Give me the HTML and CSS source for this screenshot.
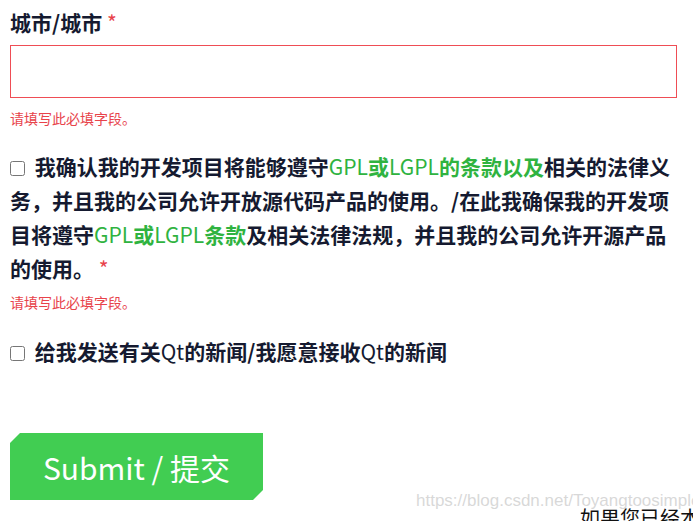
FILE: index.html
```html
<!DOCTYPE html>
<html>
<head>
   <meta charset="utf-8">
   <title>Qt 表单</title>
   <link rel="stylesheet" href="styles.css">
</head>
<body>
<div id="w">
   <form id="qform">
      <div class="field">
         <label class="flabel" for="city">城市/城市 <span class="req">*</span></label>
         <input type="text" id="city" name="city" class="finput">
         <p class="ferr">请填写此必填字段。</p>
      </div>

      <div class="field">
         <p class="check">
            <input type="checkbox" id="gpl" class="cbox">
            <label for="gpl">我确认我的开发项目将能够遵守<span class="green"><span class="latin">GPL</span>或<span class="latin">LGPL</span>的条款以及</span>相关的法律义务，并且我的公司允许开放源代码产品的使用。/在此我确保我的开发项目将遵守<span class="green"><span class="latin">GPL</span>或<span class="latin">LGPL</span>条款</span>及相关法律法规，并且我的公司允许开源产品的使用。 <span class="req">*</span></label>
         </p>
         <p class="ferr">请填写此必填字段。</p>
      </div>

      <div class="field">
         <p class="check">
            <input type="checkbox" id="news" class="cbox">
            <label for="news">给我发送有关<span class="latin">Qt</span>的新闻/我愿意接收<span class="latin">Qt</span>的新闻</label>
         </p>
      </div>

      <button type="button" class="submit">Submit / 提交</button>
   </form>

   <p class="more">如果您已经本</p>
</div>
<div class="mark">https://blog.csdn.net/Toyangtoosimple</div>
</body>
</html>
```

FILE: styles.css
```css
* { margin: 0; padding: 0; }
html, body { height: 100%; overflow: hidden; }
body { font-family: "Noto Sans CJK SC", "Noto Sans", sans-serif; color: #151a30; background: #fff; }

#w { padding: 8px 16px 0 10px; }

.flabel { display: block; font-size: 21px; font-weight: bold; line-height: 28px; }
.req { color: #e8434b; font-weight: normal; }

.finput {
display: block;
width: 667px;
height: 53px;
margin-top: 9px;
border: 1px solid #ef4d55;
box-sizing: border-box;
outline: none;
}

.ferr { font-size: 14px; line-height: 20px; color: #e8434b; margin-top: 10px; }

.check { font-size: 21px; font-weight: bold; line-height: 34px; margin-top: 21px; width: 667px; }
.check .cbox { width: 15px; height: 15px; margin: 0 5px 0 0; vertical-align: -1px; }
.check .latin { font-weight: normal; }
.green { color: #2fb340; }

.field:nth-child(2) .ferr { margin-top: 7px; }
.field:nth-child(3) .check { margin-top: 22px; }

.submit {
display: block;
margin-top: 65px;
width: 253px;
height: 67px;
border: 0;
background: #41cd52;
color: #fff;
font-family: "Noto Sans CJK SC", "Noto Sans", sans-serif;
font-size: 30px;
clip-path: polygon(10px 0, 100% 0, 100% calc(100% - 10px), calc(100% - 10px) 100%, 0 100%, 0 10px);
}

.more { margin-top: 6px; padding-left: 570px; font-size: 20px; line-height: 24px; color: #111; white-space: nowrap; }

.mark { position: absolute; left: 416px; top: 491px; font-family: "Liberation Sans", Arial, sans-serif; font-size: 17px; color: rgba(190, 190, 190, 0.6); }
```
